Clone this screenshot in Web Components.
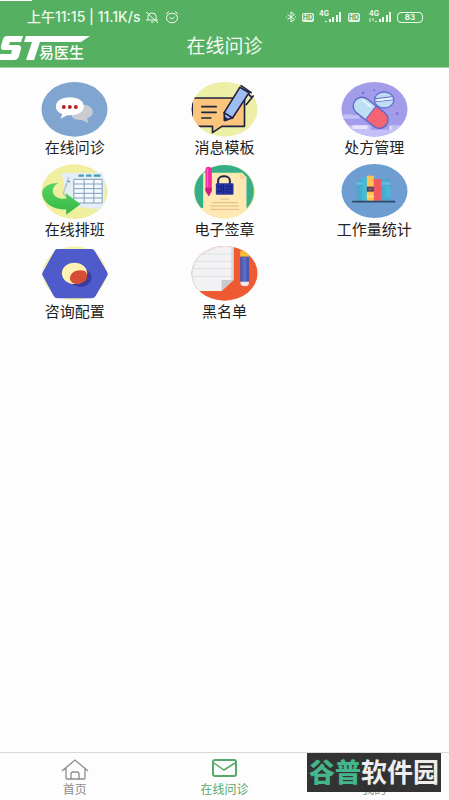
<!DOCTYPE html>
<html lang="zh-CN">
<head>
<meta charset="utf-8">
<meta name="viewport" content="width=device-width, initial-scale=1">
<title>在线问诊</title>
<style>
    body {
        margin: 0;
        background: #FDFDFD;
        color: #222;
        font-family: "Noto Sans", "Noto Sans CJK SC", sans-serif;
    }
</style>
</head>
<body>
<doctor-app></doctor-app>

<template id="status-bar">
<style>
    :host {
        display: flex;
        justify-content: space-between;
        align-items: center;
        height: 34px;
        padding: 0 26px 0 27px;
        color: #EFFAEF;
        font-size: 14px;
        line-height: 16px;
        font-weight: 500;
        font-family: Inter, "Noto Sans CJK SC", sans-serif;
    }
    div { display: flex; align-items: center; }
    .left { gap: 5px; }
    .right { gap: 5px; }
    svg { display: block; fill: none; stroke: currentColor; }
    .hd {
        background: #E3F4E3;
        color: #56B062;
        border-radius: 2px;
        width: 12px;
        font-size: 7px;
        line-height: 9px;
        font-weight: 700;
        text-align: center;
    }
    .battery {
        width: 24px;
        line-height: 9px;
        border: 1px solid currentColor;
        border-radius: 4px;
        font-size: 8px;
        font-weight: 700;
        text-align: center;
    }
    .signal text { fill: currentColor; stroke: none; font-size: 7px; font-weight: 700; }
</style>
<div class="left">
    <span>上午11:15 | 11.1K/s</span>
    <svg width="14" height="14" viewBox="0 0 14 14"><path d="M3 10V6q0-3 4-3t4 3v4M1 10h12M6 12h3M1 2l12 11"/></svg>
    <svg width="16" height="14" viewBox="0 0 16 14"><ellipse cx="8" cy="8" rx="5.5" ry="4.8"/><path d="M2 4l3-2.500M14 4l-3-2.500M5.500 7.500L8 9l2.500-2"/></svg>
</div>
<div class="right">
    <svg width="12" height="12" viewBox="0 0 12 12"><path d="M2.500 3.500l7 5L6 11V1l3.500 2.500-7 5M1 6h1M10 6h1"/></svg>
    <span class="hd">HD</span>
    <svg class="signal" width="24" height="14" viewBox="0 0 24 14"><text x="0" y="6">4G</text><path stroke-width="2" d="M7 12v-1M11 12V9M14 12V7M18 12V5M21 12V2"/></svg>
    <span class="hd">HD</span>
    <svg class="signal" width="27" height="14" viewBox="0 0 27 14"><text x="4" y="6">4G</text><path stroke-width="2" d="M11 12v-1M15 12V9M18 12V7M22 12V5M25 12V2"/><path d="M5 8v4M8 8v3"/></svg>
    <span class="battery">83</span>
</div>
</template>

<template id="title-bar">
<style>
    :host {
        display: grid;
        grid-template-columns: 1fr auto 1fr;
        align-items: center;
        height: 33px;
        color: #F2FBF2;
    }
    .brand { display: flex; }
    svg { display: block; }
    text { font-size: 15px; font-weight: 500; }
    h1 {
        margin: 0;
        padding-bottom: 10px;
        font-size: 19px;
        line-height: 24px;
        font-weight: 400;
    }
</style>
<div class="brand">
    <svg width="92" height="33" viewBox="0 0 92 33" fill="#FFF">
        <path d="M7 1H23L21 7H10L9 10H17Q22 10 21 14L19 21Q18 25 14 25H0V19H11L12 15H4Q0 15 1 11L3 4Q4 1 7 1Z"/>
        <path d="M26 1H90L81 7H40L34 25H26L32 7H24Z"/>
        <text x="39" y="23">易医生</text>
    </svg>
</div>
<h1><slot></slot></h1>
</template>

<template id="menu-item">
<style>
    :host { display: block; }
    a {
        display: flex;
        flex-direction: column;
        align-items: center;
        color: inherit;
        text-decoration: none;
        font-size: 15px;
        line-height: 20px;
    }
    ::slotted(svg) { display: block; width: 67px; height: 55px; }
</style>
<a href="#"><slot name="icon"></slot><span><slot></slot></span></a>
</template>

<template id="tab-item">
<style>
    :host { display: block; color: #8C8C8C; }
    :host([active]) { color: #56A968; }
    a {
        display: flex;
        flex-direction: column;
        align-items: center;
        padding-top: 5px;
        color: inherit;
        text-decoration: none;
        font-size: 12px;
        line-height: 16px;
    }
    ::slotted(svg) {
        display: block;
        width: 30px;
        height: 24px;
        fill: none;
        stroke: currentColor;
    }
</style>
<a href="#"><slot name="icon"></slot><span><slot></slot></span></a>
</template>

<template id="site-badge">
<style>
    :host {
        display: block;
        padding: 0 2px;
        background: rgba(40, 40, 40, .95);
        color: #EEE;
        font-size: 26px;
        line-height: 39px;
        font-weight: 700;
        white-space: nowrap;
    }
    b { color: #45B58C; }
</style>
<b>谷普</b>软件园
</template>

<template id="doctor-app">
<style>
    :host {
        display: flex;
        flex-direction: column;
        min-height: 100vh;
    }
    header {
        background: linear-gradient(#FFF, #FFF) 0 0 / 32px 1px no-repeat #56B062;
        border-bottom: 1px solid #A9CFAD;
    }
    main {
        flex: 1;
        display: grid;
        grid-template-columns: repeat(3, 1fr);
        align-content: start;
        gap: 7px 0;
        padding-top: 14px;
    }
    nav {
        position: relative;
        display: grid;
        grid-template-columns: repeat(3, 1fr);
        height: 47px;
        border-top: 1px solid #D9D9D9;
    }
    site-badge {
        position: absolute;
        top: 0;
        right: 8px;
    }
</style>
<header>
    <status-bar></status-bar>
    <title-bar>在线问诊</title-bar>
</header>
<main>
    <menu-item>
        <svg slot="icon" viewBox="33 23 200 165">
            <ellipse cx="133" cy="105" rx="99" ry="82" fill="#7FA5D0"/>
            <path d="M150 92C178 88 190 104 188 116Q186 126 171 132L174 146L155 137C130 138 122 128 124 116Z" fill="#C9CDD2"/>
            <path d="M119 69C146 69 161 81 161 96S146 123 119 123H111L91 133L97 120C83 115 77 106 77 96C77 81 94 69 119 69Z" fill="#FFF"/>
            <g fill="#B8232A"><circle cx="101" cy="98" r="6"/><circle cx="119" cy="98" r="6"/><circle cx="137" cy="98" r="6"/></g>
        </svg>
        在线问诊
    </menu-item>
    <menu-item>
        <svg slot="icon" viewBox="33 23 200 165">
            <defs><clipPath id="note"><ellipse cx="133" cy="105" rx="99" ry="82"/></clipPath></defs>
            <ellipse cx="133" cy="105" rx="99" ry="82" fill="#EEEFA6"/>
            <g clip-path="url(#note)" stroke="#20233F" stroke-width="5" stroke-linejoin="round" stroke-linecap="round">
                <path d="M36 71H193V156H125L97 175V156H36Z" fill="#FBC57E"/>
                <path d="M65 97H108M65 114H108M65 131H92" fill="none"/>
            </g>
            <g stroke="#20233F" stroke-width="5" stroke-linejoin="round" stroke-linecap="round">
                <path d="M179 39L207 55L157 131L133 138L132 115Z" fill="#9FBDF5"/>
                <path d="M132 115L157 131M183 34L213 55M206 60L215 70L198 91M215 70L219 65" fill="none"/>
                <path d="M134 129L141 136L133 138Z" fill="#20233F"/>
            </g>
        </svg>
        消息模板
    </menu-item>
    <menu-item>
        <svg slot="icon" viewBox="33 23 200 165">
            <defs><clipPath id="pill"><ellipse cx="133" cy="105" rx="99" ry="82"/></clipPath></defs>
            <ellipse cx="133" cy="105" rx="99" ry="82" fill="#A39CEB"/>
            <g clip-path="url(#pill)">
                <path d="M35 123Q55 116 76 123H88V133H35ZM50 153H122V166H178V153H215V190H50Z" fill="#C4C0F7"/>
                <path d="M67 153H112V164H67ZM178 155H184V166H178Z" fill="#E6E3FC"/>
                <circle cx="99" cy="56" r="4" fill="#7970DA"/><circle cx="132" cy="48" r="3" fill="#7970DA"/><circle cx="201" cy="118" r="4" fill="#7970DA"/>
            </g>
            <g transform="rotate(38 121 115)">
                <rect x="62" y="89" width="119" height="52" rx="26" fill="#BEDEF6"/>
                <path d="M122 89H155A26 26 0 0 1 155 141H122Z" fill="#F36572"/>
                <rect x="62" y="89" width="119" height="52" rx="26" fill="none" stroke="#5865C4" stroke-width="4"/>
                <path d="M122 89V141" stroke="#5865C4" stroke-width="3"/>
                <path d="M78 100H111" stroke="#EAF7FF" stroke-width="5" stroke-linecap="round"/>
            </g>
            <ellipse cx="162" cy="77" rx="29" ry="24" fill="#BFDCF7" stroke="#6871CE" stroke-width="4"/>
            <path d="M134 73L188 67M136 82L190 76" stroke="#6871CE" stroke-width="3"/>
            <path d="M140 78L187 72" stroke="#EAF7FF" stroke-width="5"/>
        </svg>
        处方管理
    </menu-item>
    <menu-item>
        <svg slot="icon" viewBox="33 21 200 165">
            <defs><linearGradient id="arrow" x2="0" y2="1"><stop stop-color="#57D462"/><stop offset="1" stop-color="#35B846"/></linearGradient></defs>
            <ellipse cx="133" cy="104" rx="99" ry="82" fill="#F0EE9F"/>
            <path d="M94 48L216 47L224 78L222 142L208 157L116 147Z" fill="#E5EEF6"/>
            <path d="M116 60L99 110L129 143M111 82L102 97" fill="none" stroke="#B3C8DC" stroke-width="4"/>
            <path d="M131 65H216V138H131Z" fill="#F5F9FD"/>
            <path d="M131 67H216V138H131ZM131 81H216M131 95H216M131 109H216M131 123H216M162 67V138M191 67V138" fill="none" stroke="#7E9DBD" stroke-width="3"/>
            <path d="M145 56H161M168 56H184M191 56H211M116 71V76" stroke="#429BBB" stroke-width="7"/>
            <path d="M86 78C70 84 65 98 70 110C76 122 91 127 109 125L106 108L151 142L108 173V157C71 160 39 138 36 111C34 91 58 77 86 78Z" fill="url(#arrow)"/>
        </svg>
        在线排班
    </menu-item>
    <menu-item>
        <svg slot="icon" viewBox="33 21 200 165">
            <ellipse cx="133" cy="104" rx="92" ry="81" fill="#F2EDAA"/>
            <path d="M133 24C85 24 43 58 43 102Q43 132 63 153H201Q221 132 221 102C221 58 181 24 133 24Z" fill="#35AF89"/>
            <path d="M69 47H186L199 61V156Q168 183 133 183Q96 183 69 158Z" fill="#FFE8B2"/>
            <path d="M180 47V66H199Z" fill="#F8D49E"/>
            <path d="M120 126H147M95 137H172M90 147H176M90 157H176" stroke="#DFB887" stroke-width="3"/>
            <path d="M76 38Q76 29 85 29T95 38V100L86 118L76 100Z" fill="#F42AA5"/>
            <path d="M76 92H95V102L86 118L76 102Z" fill="#CC207F"/>
            <path d="M82 36V90" stroke="#FF64C0" stroke-width="4"/>
            <path d="M114 82V70C114 54 149 54 149 70V82" fill="none" stroke="#22264B" stroke-width="6"/>
            <rect x="107" y="79" width="53" height="34" rx="3" fill="#2835A0"/>
            <path d="M112 89H124V103H112M130 82V110M137 88H155V96H138V105H155" fill="none" stroke="#142078" stroke-width="3"/>
        </svg>
        电子签章
    </menu-item>
    <menu-item>
        <svg slot="icon" viewBox="33 21 200 165">
            <ellipse cx="133" cy="102" rx="99" ry="81" fill="#6E9DD2"/>
            <path d="M79 70H96V131H79ZM154 66H180V131H154Z" fill="#4EA5D0"/>
            <path d="M96 61H110V131H96ZM166 86H180V120H166Z" fill="#3DBED8"/>
            <path d="M79 75H96V83H79ZM154 75H180V83H154Z" fill="#69BBDD"/>
            <path d="M110 56H131V131H110Z" fill="#FFC34F"/>
            <path d="M131 66H153V131H131Z" fill="#F05961"/>
            <path d="M110 89H131V104H110Z" fill="#44415E"/>
            <path d="M115 93H126V100H115Z" fill="#8A5460"/>
            <path d="M110 116H131V121H110Z" fill="#FCDD82"/>
            <path d="M68 134H193" stroke="#324966" stroke-width="5" stroke-linecap="round"/>
        </svg>
        工作量统计
    </menu-item>
    <menu-item>
        <svg slot="icon" viewBox="33 18 200 165">
            <ellipse cx="133" cy="100" rx="96" ry="81" fill="#F5F2B1"/>
            <path d="M81 27H184Q190 27 194 33L231 96Q234 102 231 108L196 169Q192 175 185 175H82Q75 175 71 169L38 108Q34 102 38 96L73 33Q76 27 81 27Z" fill="#505BCB"/>
            <ellipse cx="151" cy="113" rx="33" ry="28" fill="#3D3D9E"/>
            <ellipse cx="133" cy="100" rx="38" ry="32" fill="#FFF3B4"/>
            <path d="M120 121C115 101 136 85 165 93C180 112 165 132 136 132Q124 129 120 121Z" fill="#D84D35"/>
        </svg>
        咨询配置
    </menu-item>
    <menu-item>
        <svg slot="icon" viewBox="33 18 200 165">
            <defs><clipPath id="paper"><ellipse cx="133" cy="100" rx="99" ry="82"/></clipPath></defs>
            <g clip-path="url(#paper)">
                <path d="M30 15H235V185H30Z" fill="#F05A32"/>
                <path d="M30 15H160V120L124 153H30Z" fill="#F2F2F4"/>
                <path d="M153 15H160V121H153Z" fill="#D9DADD"/>
                <path d="M160 120H124V153Z" fill="#C7C9CE"/>
                <path d="M30 42H153M30 64H153M30 86H153M30 109H153" stroke="#DEE0E4" stroke-width="3"/>
                <path d="M180 34L202 30L207 50H180Z" fill="#F6BF37"/>
                <path d="M180 50H207V125H180Z" fill="#4958AD"/>
                <path d="M187 50H199V125H187Z" fill="#5A6DC2"/>
                <path d="M181 125H206V131Q206 138 194 138T181 131Z" fill="#F2E7EB"/>
            </g>
            <path d="M50 146C20 105 36 30 133 19" fill="none" stroke="#D8D8D8" stroke-width="2"/>
        </svg>
        黑名单
    </menu-item>
</main>
<nav>
    <tab-item>
        <svg slot="icon" viewBox="0 0 30 24"><path d="M2 13L15 2L28 13M6 10V20Q6 21 7 21H24Q25 21 25 20V10M11 21V16Q11 14 13 14H17Q19 14 19 16V21" stroke-width="1.300"/></svg>
        首页
    </tab-item>
    <tab-item active>
        <svg slot="icon" viewBox="0 0 30 24"><rect x="4" y="2" width="23" height="16" rx="2" stroke-width="2"/><path d="M5 5L15 12L26 5" stroke-width="1.500"/></svg>
        在线问诊
    </tab-item>
    <tab-item>
        <svg slot="icon" viewBox="0 0 30 24"><circle cx="15" cy="7" r="5"/><path d="M5 21Q5 13 15 13T25 21Z"/></svg>
        我的
    </tab-item>
    <site-badge></site-badge>
</nav>
</template>

<script>
class BaseElement extends HTMLElement {

    constructor() {
        super()
        const template = document.getElementById(this.localName)
        this.attachShadow({mode: 'open'})
        this.shadowRoot.appendChild(template.content.cloneNode(true))
    }
}

class StatusBar extends BaseElement {}
class TitleBar extends BaseElement {}
class MenuItem extends BaseElement {}
class TabItem extends BaseElement {}
class SiteBadge extends BaseElement {}
class DoctorApp extends BaseElement {}

customElements.define('status-bar', StatusBar)
customElements.define('title-bar', TitleBar)
customElements.define('menu-item', MenuItem)
customElements.define('tab-item', TabItem)
customElements.define('site-badge', SiteBadge)
customElements.define('doctor-app', DoctorApp)
</script>
</body>
</html>
